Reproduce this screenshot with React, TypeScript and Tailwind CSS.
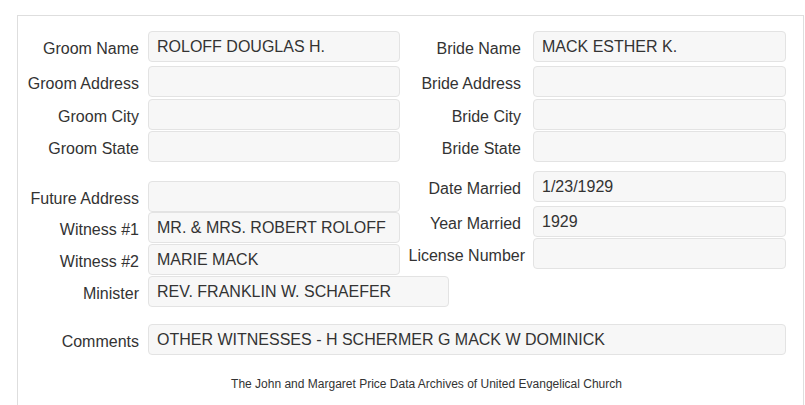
import React from "react";

type FieldProps = {
  label: string;
  value?: string;
  labelW: number;
  gap: number;
  inputW: number;
  className?: string;
  labelClass?: string;
};

const LW: Record<number, string> = { 121: "w-[121px]", 130: "w-[130px]" };
const GW: Record<number, string> = { 9: "w-[9px]", 12: "w-[12px]", 8: "w-[8px]" };
const IW: Record<number, string> = {
  252: "w-[252px]",
  253: "w-[253px]",
  301: "w-[301px]",
  638: "w-[638px]",
};

function Field({ label, value, labelW, gap, inputW, className, labelClass }: FieldProps) {
  return (
    <div className={"flex items-center " + (className ?? "")}>
      <div className={LW[labelW] + " shrink-0 text-right pt-[4px] whitespace-nowrap text-[16px] text-[#333]"}>
        <span className={labelClass ?? ""}>{label}</span>
      </div>
      <div className={GW[gap] + " shrink-0"} />
      <div
        className={
          IW[inputW] +
          " shrink-0 h-[31px] rounded-[4px] border border-[#e3e3e3] bg-[#f7f7f7] pl-[8px] flex items-center text-[16px] text-[#333] whitespace-nowrap overflow-hidden"
        }
      >
        {value}
      </div>
    </div>
  );
}

export default function App() {
  return (
    <div
      className="w-[805px] h-[405px] overflow-hidden bg-white"
      style={{ fontFamily: '"Liberation Sans", Arial, sans-serif' }}
    >
      <div className="ml-[17px] mt-[15px] w-[787px] h-[420px] border border-[#dedede] pt-[15px]">
        {/* top section */}
        <div className="flex flex-col">
          <div className="flex">
            <Field label="Groom Name" value="ROLOFF DOUGLAS H." labelW={121} gap={9} inputW={252} />
            <Field label="Bride Name" value="MACK ESTHER K." labelW={121} gap={12} inputW={253} />
          </div>
          <div className="flex mt-[4px]">
            <Field label="Groom Address" labelW={121} gap={9} inputW={252} />
            <Field label="Bride Address" labelW={121} gap={12} inputW={253} />
          </div>
          <div className="flex mt-[2px]">
            <Field label="Groom City" labelW={121} gap={9} inputW={252} />
            <Field label="Bride City" labelW={121} gap={12} inputW={253} />
          </div>
          <div className="flex mt-[1px]">
            <Field label="Groom State" labelW={121} gap={9} inputW={252} />
            <Field label="Bride State" labelW={121} gap={12} inputW={253} />
          </div>
        </div>

        {/* lower section */}
        <div className="flex items-start">
          <div className="flex flex-col w-[382px]">
            <Field className="mt-[19px]" label="Future Address" labelW={121} gap={9} inputW={252} />
            <Field label="Witness #1" value="MR. & MRS. ROBERT ROLOFF" labelW={121} gap={9} inputW={252} />
            <Field className="mt-[1px]" label="Witness #2" value="MARIE MACK" labelW={121} gap={9} inputW={252} />
            <Field className="mt-[1px]" label="Minister" value="REV. FRANKLIN W. SCHAEFER" labelW={121} gap={9} inputW={301} />
          </div>
          <div className="flex flex-col">
            <Field className="mt-[9px]" label="Date Married" value="1/23/1929" labelW={121} gap={12} inputW={253} />
            <Field className="mt-[4px]" label="Year Married" value="1929" labelW={121} gap={12} inputW={253} />
            <Field
              className="mt-[1px]"
              label="License Number"
              labelW={121}
              gap={12}
              inputW={253}
              labelClass="relative left-[4px]"
            />
          </div>
        </div>

        <Field className="mt-[17px]" label="Comments" value="OTHER WITNESSES - H SCHERMER G MACK W DOMINICK" labelW={121} gap={9} inputW={638} />

        <div className="mt-[21px] pl-[32px] text-center text-[12px] leading-[16px] text-[#333]">
          The John and Margaret Price Data Archives of United Evangelical Church
        </div>
      </div>
    </div>
  );
}
